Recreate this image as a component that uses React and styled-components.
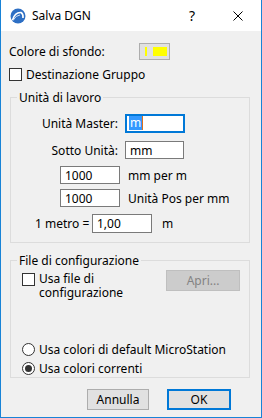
import styled, { createGlobalStyle } from "styled-components";

const GlobalStyle = createGlobalStyle`
  html, body {
    margin: 0;
    padding: 0;
    background: #ffffff;
  }
  body {
    font-family: "Noto Sans", "Open Sans", sans-serif;
    font-size: 12px;
    color: #000;
  }
`;

const Window = styled.div`
  box-sizing: border-box;
  width: 262px;
  height: 418px;
  border: 1px solid #1883d7;
  border-top: none;
  background: #f0f0f0;
  display: flex;
  flex-direction: column;
  overflow: hidden;
`;

const TitleBar = styled.div`
  height: 31px;
  background: #fff;
  display: flex;
  align-items: center;
  padding-left: 9px;
  flex-shrink: 0;
`;

const Title = styled.span`
  margin-left: 6px;
  font-size: 12px;
  flex: 1;
`;

const TitleButton = styled.span`
  width: 46px;
  height: 31px;
  display: flex;
  align-items: center;
  justify-content: center;
  font-size: 14px;
`;

const Body = styled.div`
  display: flex;
  flex-direction: column;
  padding: 10px 11px 0 8px;
`;

const Row = styled.div`
  display: flex;
  align-items: center;
  gap: ${(p) => p.$gap ?? 6}px;
  padding-left: ${(p) => p.$indent || 0}px;
  margin-top: ${(p) => p.$top || 0}px;
  height: ${(p) => p.$h || 18}px;
`;

const Label = styled.span`
  white-space: nowrap;
  width: ${(p) => (p.$w ? p.$w + "px" : "auto")};
  text-align: ${(p) => p.$align || "left"};
  margin-left: ${(p) => p.$left || 0}px;
`;

const Swatch = styled.div`
  box-sizing: border-box;
  width: 31px;
  height: 17px;
  border: 1px solid #adadad;
  background: #e1e1e1;
  display: flex;
  align-items: center;
  padding-left: 5px;
  gap: 6px;
`;

const SwatchBar = styled.span`
  width: ${(p) => p.$w}px;
  height: 9px;
  background: #ffff00;
`;

const Box = styled.span`
  box-sizing: border-box;
  width: 13px;
  height: 13px;
  margin-top: ${(p) => p.$top || 0}px;
  border: 1px solid #333;
  background: #fff;
  flex-shrink: 0;
`;

const Radio = styled.span`
  box-sizing: border-box;
  width: 13px;
  height: 13px;
  border: 1px solid #333;
  border-radius: 50%;
  background: #fff;
  flex-shrink: 0;
  display: flex;
  align-items: center;
  justify-content: center;

  &::after {
    content: "";
    width: 7px;
    height: 7px;
    border-radius: 50%;
    background: ${(p) => (p.$on ? "#333" : "transparent")};
  }
`;

const Group = styled.fieldset`
  box-sizing: border-box;
  margin: ${(p) => p.$top}px 0 0 1px;
  padding: 0 0 ${(p) => p.$bottom}px 0;
  border: 1px solid #dcdcdc;
`;

const Legend = styled.legend`
  padding: 0 2px;
  margin-left: 6px;
  font-size: 12px;
`;

const Input = styled.div`
  box-sizing: border-box;
  width: ${(p) => p.$w || 60}px;
  height: ${(p) => p.$h || 18}px;
  border: ${(p) => (p.$focus ? "2px solid #0078d7" : "1px solid #7a7a7a")};
  background: #fff;
  display: flex;
  align-items: center;
  padding-left: ${(p) => (p.$focus ? 2 : 4)}px;
  flex-shrink: 0;
`;

const Selected = styled.span`
  background: #3399ff;
  color: #fff;
  border-right: 1px solid #e0701c;
  padding: 0 1px;
  line-height: 14px;
`;

const ConfigRow = styled.div`
  display: flex;
  align-items: flex-start;
  margin-top: 3px;
  padding-left: 11px;
  height: 29px;
`;

const CheckWrap = styled.div`
  display: flex;
  align-items: flex-start;
  gap: 4px;
  height: 32px;
`;

const WrapText = styled.span`
  width: 100px;
  line-height: 14px;
`;

const Button = styled.div`
  box-sizing: border-box;
  width: ${(p) => p.$w}px;
  height: ${(p) => p.$h || 21}px;
  margin-left: ${(p) => p.$left || 0}px;
  margin-top: ${(p) => p.$top || 0}px;
  display: flex;
  align-items: center;
  justify-content: center;
  background: ${(p) => (p.$disabled ? "#cccccc" : "#e1e1e1")};
  color: ${(p) => (p.$disabled ? "#838383" : "#000")};
  border: ${(p) =>
    p.$default ? "2px solid #0078d7" : p.$disabled ? "1px solid #bfbfbf" : "1px solid #adadad"};
`;

const Footer = styled.div`
  display: flex;
  justify-content: flex-end;
  gap: 18px;
  padding: 11px 19px 0 0;
`;

const AppIcon = () => (
  <svg width="16" height="16" viewBox="0 0 16 16">
    <circle cx="8" cy="8" r="7.5" fill="#2d6fc4" />
    <path d="M2.5 12 Q5 4 11 4.5 Q13.5 6 13 10" fill="none" stroke="#fff" strokeWidth="1.6" />
    <path d="M3 12.5 Q6 7 10 7" fill="none" stroke="#cfe0f7" strokeWidth="1" />
  </svg>
);

const CloseIcon = () => (
  <svg width="10" height="10" viewBox="0 0 10 10">
    <path d="M0.5 0.5 L9.5 9.5 M9.5 0.5 L0.5 9.5" stroke="#000" strokeWidth="1" />
  </svg>
);

const App = () => {
  return (
    <>
      <GlobalStyle />
      <Window>
        <TitleBar>
          <AppIcon />
          <Title>Salva DGN</Title>
          <TitleButton>?</TitleButton>
          <TitleButton>
            <CloseIcon />
          </TitleButton>
        </TitleBar>
        <Body>
          <Row $top={1} $h={18} $gap={0}>
            <Label $w={130}>Colore di sfondo:</Label>
            <Swatch>
              <SwatchBar $w={2} />
              <SwatchBar $w={14} />
            </Swatch>
          </Row>
          <Row $top={7} $h={14} $gap={4}>
            <Box />
            <Label>Destinazione Gruppo</Label>
          </Row>
          <Group $top={8} $bottom={9}>
            <Legend>Unità di lavoro</Legend>
            <Row $top={8} $gap={7}>
              <Label $w={107} $align="right">Unità Master:</Label>
              <Input $focus $w={60} $h={19}>
                <Selected>m</Selected>
              </Input>
            </Row>
            <Row $top={9} $gap={7}>
              <Label $w={107} $align="right">Sotto Unità:</Label>
              <Input $w={59}>mm</Input>
            </Row>
            <Row $top={7} $gap={8} $indent={49}>
              <Input $w={60}>1000</Input>
              <Label>mm per m</Label>
            </Row>
            <Row $top={5} $gap={8} $indent={49}>
              <Input $w={60}>1000</Input>
              <Label>Unità Pos per mm</Label>
            </Row>
            <Row $top={7} $gap={0} $indent={24} $h={19}>
              <Label $w={57}>1 metro =</Label>
              <Input $w={60} $h={19}>1,00</Input>
              <Label $left={10}>m</Label>
            </Row>
          </Group>
          <Group $top={9} $bottom={2}>
            <Legend>File di configurazione</Legend>
            <ConfigRow>
              <CheckWrap>
                <Box $top={1} />
                <WrapText>Usa file di configurazione</WrapText>
              </CheckWrap>
              <Button $w={74} $left={27} $top={-2} $disabled>Apri...</Button>
            </ConfigRow>
            <Row $top={41} $indent={11} $gap={4} $h={14}>
              <Radio />
              <Label>Usa colori di default MicroStation</Label>
            </Row>
            <Row $top={5} $indent={11} $gap={4} $h={14}>
              <Radio $on />
              <Label>Usa colori correnti</Label>
            </Row>
          </Group>
          <Footer>
            <Button $w={62}>Annulla</Button>
            <Button $w={64} $default>OK</Button>
          </Footer>
        </Body>
      </Window>
    </>
  );
};

export default App;
